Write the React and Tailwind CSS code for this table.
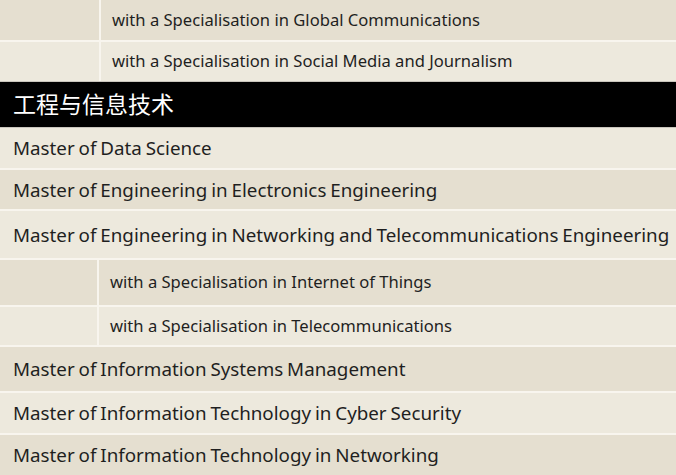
export default function App() {
  const font = { fontFamily: '"Noto Sans", "Noto Sans CJK SC", sans-serif' };
  const Main = ({ text, bg, h, border = true }) => (
    <div className={`flex items-center pl-[13px] pt-[1px] ${bg} ${h} ${border ? "border-b-2 border-[#f8f5ee]" : ""} text-[18.8px] [word-spacing:-1px] text-[#1f1f1f] whitespace-nowrap`}>
      {text}
    </div>
  );
  const Sub = ({ text, bg, h, w, pl, border = "border-b-2 border-[#f8f5ee]" }) => (
    <div className={`flex ${bg} ${h} ${border}`}>
      <div className={`${w} shrink-0 border-r-2 border-[#f8f5ee]`} />
      <div className={`flex items-center ${pl} text-[16.6px] text-[#1f1f1f] whitespace-nowrap`}>{text}</div>
    </div>
  );
  const dark = "bg-[#e5dfd0]";
  const light = "bg-[#ede9dd]";
  return (
    <div className="w-[676px] h-[475px] overflow-hidden bg-[#f8f5ee]" style={font}>
      <Sub text="with a Specialisation in Global Communications" bg={dark} h="h-[42px]" w="w-[101px]" pl="pl-[11px]" />
      <Sub text="with a Specialisation in Social Media and Journalism" bg={light} h="h-[40px]" w="w-[101px]" pl="pl-[11px]" border="border-b border-[#c9c5bd]" />
      <div className="flex items-center h-[46px] bg-black text-white pl-[13px] text-[23px] border-b border-[#c9c5bd]">
        工程与信息技术
      </div>
      <Main text="Master of Data Science" bg={light} h="h-[42px]" />
      <Main text="Master of Engineering in Electronics Engineering" bg={dark} h="h-[41px]" />
      <Main text="Master of Engineering in Networking and Telecommunications Engineering" bg={light} h="h-[49px]" />
      <Sub text="with a Specialisation in Internet of Things" bg={dark} h="h-[47px]" w="w-[99px]" pl="pl-[11px]" />
      <Sub text="with a Specialisation in Telecommunications" bg={light} h="h-[40px]" w="w-[99px]" pl="pl-[11px]" />
      <Main text="Master of Information Systems Management" bg={dark} h="h-[46px]" />
      <Main text="Master of Information Technology in Cyber Security" bg={light} h="h-[42px]" />
      <Main text="Master of Information Technology in Networking" bg={dark} h="h-[40px]" border={false} />
    </div>
  );
}
